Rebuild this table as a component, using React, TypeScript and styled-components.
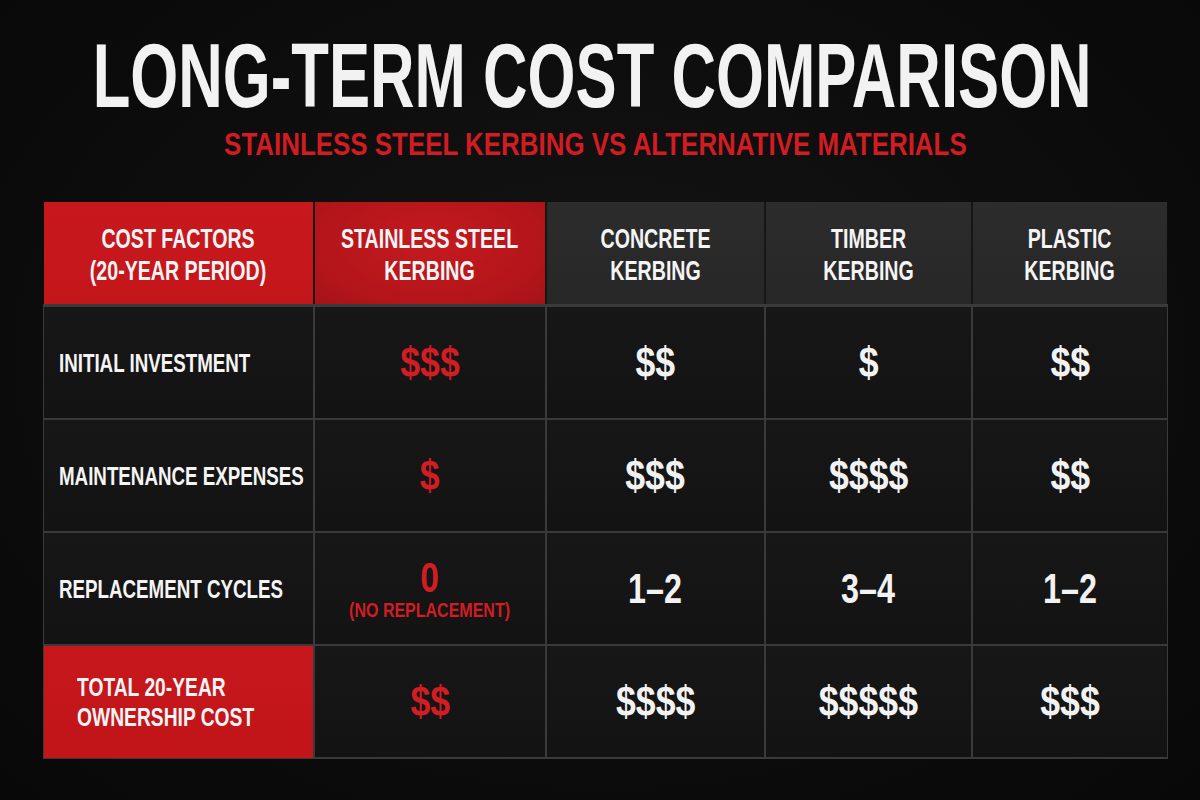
import React from "react";
import styled, { createGlobalStyle } from "styled-components";

const GlobalStyle = createGlobalStyle`
  html, body {
    margin: 0;
    padding: 0;
    width: 1200px;
    height: 800px;
    overflow: hidden;
    background: #0b0b0b;
  }
  * { box-sizing: border-box; }
`;

const Page = styled.div`
  width: 1200px;
  height: 800px;
  background: radial-gradient(ellipse at 50% 45%, #151515 0%, #0d0d0d 55%, #080808 100%);
  font-family: "Liberation Sans", Arial, sans-serif;
  font-weight: 700;
  color: #f1f1f1;
  display: flex;
  flex-direction: column;
  padding-top: 31px;
`;

const Squeeze = styled.span<{ $sx: number; $origin?: string }>`
  display: inline-block;
  white-space: nowrap;
  transform: scaleX(${(p) => p.$sx});
  transform-origin: ${(p) => p.$origin || "center"} center;
`;

const TitleRow = styled.div`
  display: flex;
  justify-content: center;
  padding-right: 15px;
  font-size: 90px;
  line-height: 90px;
  height: 90px;
  color: #f2f2f2;
`;

const SubtitleRow = styled.div`
  display: flex;
  justify-content: center;
  padding-right: 10px;
  margin-top: 7px;
  font-size: 32px;
  line-height: 32px;
  height: 32px;
  color: #d11c22;
`;

const TableWrap = styled.div`
  margin-top: 42px;
  margin-left: 44px;
  width: 1123px;
  display: flex;
  flex-direction: column;
`;

const Grid = styled.div<{ $head?: boolean }>`
  display: grid;
  grid-template-columns: 269px 230px 217px 205px 194px;
  column-gap: 2px;
  row-gap: 2px;
  background: ${(p) => (p.$head ? "#161616" : "#3a3a3a")};
  ${(p) =>
    p.$head
      ? ""
      : `
    padding-top: 2px;
    box-shadow: 0 0 0 1px #3a3a3a;
  `}
`;

type Variant = "redHead" | "steelHead" | "darkHead" | "body" | "redLabel";

const backgrounds: Record<Variant, string> = {
  redHead: "linear-gradient(180deg, #c8181d 0%, #c3161b 100%)",
  steelHead: "radial-gradient(ellipse at 50% 40%, #c41a1f 0%, #b3151a 70%, #a51317 100%)",
  darkHead: "linear-gradient(180deg, #2c2c2c 0%, #272727 100%)",
  body: "linear-gradient(180deg, #171717 0%, #131313 100%)",
  redLabel: "linear-gradient(180deg, #c6171c 0%, #c1151a 100%)",
};

const Cell = styled.div<{ $variant: Variant; $left?: boolean; $pad?: number; $h: number }>`
  height: ${(p) => p.$h}px;
  background: ${(p) => backgrounds[p.$variant]};
  display: flex;
  flex-direction: column;
  justify-content: center;
  align-items: ${(p) => (p.$left ? "flex-start" : "center")};
  padding-left: ${(p) => p.$pad ?? 0}px;
  text-align: ${(p) => (p.$left ? "left" : "center")};
`;

const HeadText = styled.div`
  font-size: 28px;
  line-height: 32px;
  color: #f4f4f4;
  padding-top: 3px;
`;

const LabelText = styled.div`
  font-size: 25px;
  line-height: 30px;
  color: #f4f4f4;
`;

const Value = styled.div<{ $red?: boolean }>`
  font-size: 42px;
  line-height: 42px;
  color: ${(p) => (p.$red ? "#d11d23" : "#f2f2f2")};
`;

const SubNote = styled.div`
  font-size: 20px;
  line-height: 22px;
  color: #d11d23;
`;

const HeaderCell = ({ v, lines }: { v: Variant; lines: string[] }) => (
  <Cell $variant={v} $h={103}>
    <HeadText>
      <Squeeze $sx={0.7}>
        {lines[0]}
        <br />
        {lines[1]}
      </Squeeze>
    </HeadText>
  </Cell>
);

const ValueCell = ({ text, red, sx = 0.85 }: { text: string; red?: boolean; sx?: number }) => (
  <Cell $variant="body" $h={111}>
    <Value $red={red}>
      <Squeeze $sx={sx}>{text}</Squeeze>
    </Value>
  </Cell>
);

const LabelCell = ({ text }: { text: string }) => (
  <Cell $variant="body" $left $pad={15} $h={111}>
    <LabelText>
      <Squeeze $sx={0.75} $origin="left">
        {text}
      </Squeeze>
    </LabelText>
  </Cell>
);

const rows = [
  { label: "INITIAL INVESTMENT", steel: "$$$", others: ["$$", "$", "$$"] },
  { label: "MAINTENANCE EXPENSES", steel: "$", others: ["$$$", "$$$$", "$$"] },
];

export default function App() {
  return (
    <>
      <GlobalStyle />
      <Page>
        <TitleRow>
          <Squeeze $sx={0.685}>LONG-TERM COST COMPARISON</Squeeze>
        </TitleRow>
        <SubtitleRow>
          <Squeeze $sx={0.81}>STAINLESS STEEL KERBING VS ALTERNATIVE MATERIALS</Squeeze>
        </SubtitleRow>
        <TableWrap>
          <Grid $head>
            <HeaderCell v="redHead" lines={["COST FACTORS", "(20-YEAR PERIOD)"]} />
            <HeaderCell v="steelHead" lines={["STAINLESS STEEL", "KERBING"]} />
            <HeaderCell v="darkHead" lines={["CONCRETE", "KERBING"]} />
            <HeaderCell v="darkHead" lines={["TIMBER", "KERBING"]} />
            <HeaderCell v="darkHead" lines={["PLASTIC", "KERBING"]} />
          </Grid>
          <Grid>
            {rows.map((r) => (
              <React.Fragment key={r.label}>
                <LabelCell text={r.label} />
                <ValueCell text={r.steel} red />
                {r.others.map((o, i) => (
                  <ValueCell key={i} text={o} />
                ))}
              </React.Fragment>
            ))}
            <LabelCell text="REPLACEMENT CYCLES" />
            <Cell $variant="body" $h={111}>
              <Value $red>
                <Squeeze $sx={0.8}>0</Squeeze>
              </Value>
              <SubNote>
                <Squeeze $sx={0.8}>(NO REPLACEMENT)</Squeeze>
              </SubNote>
            </Cell>
            <ValueCell text="1–2" sx={0.77} />
            <ValueCell text="3–4" sx={0.77} />
            <ValueCell text="1–2" sx={0.77} />
            <Cell $variant="redLabel" $left $pad={33} $h={112}>
              <LabelText>
                <Squeeze $sx={0.77} $origin="left">
                  TOTAL 20-YEAR
                  <br />
                  OWNERSHIP COST
                </Squeeze>
              </LabelText>
            </Cell>
            <ValueCell text="$$" red />
            <ValueCell text="$$$$" />
            <ValueCell text="$$$$$" />
            <ValueCell text="$$$" />
          </Grid>
        </TableWrap>
      </Page>
    </>
  );
}
